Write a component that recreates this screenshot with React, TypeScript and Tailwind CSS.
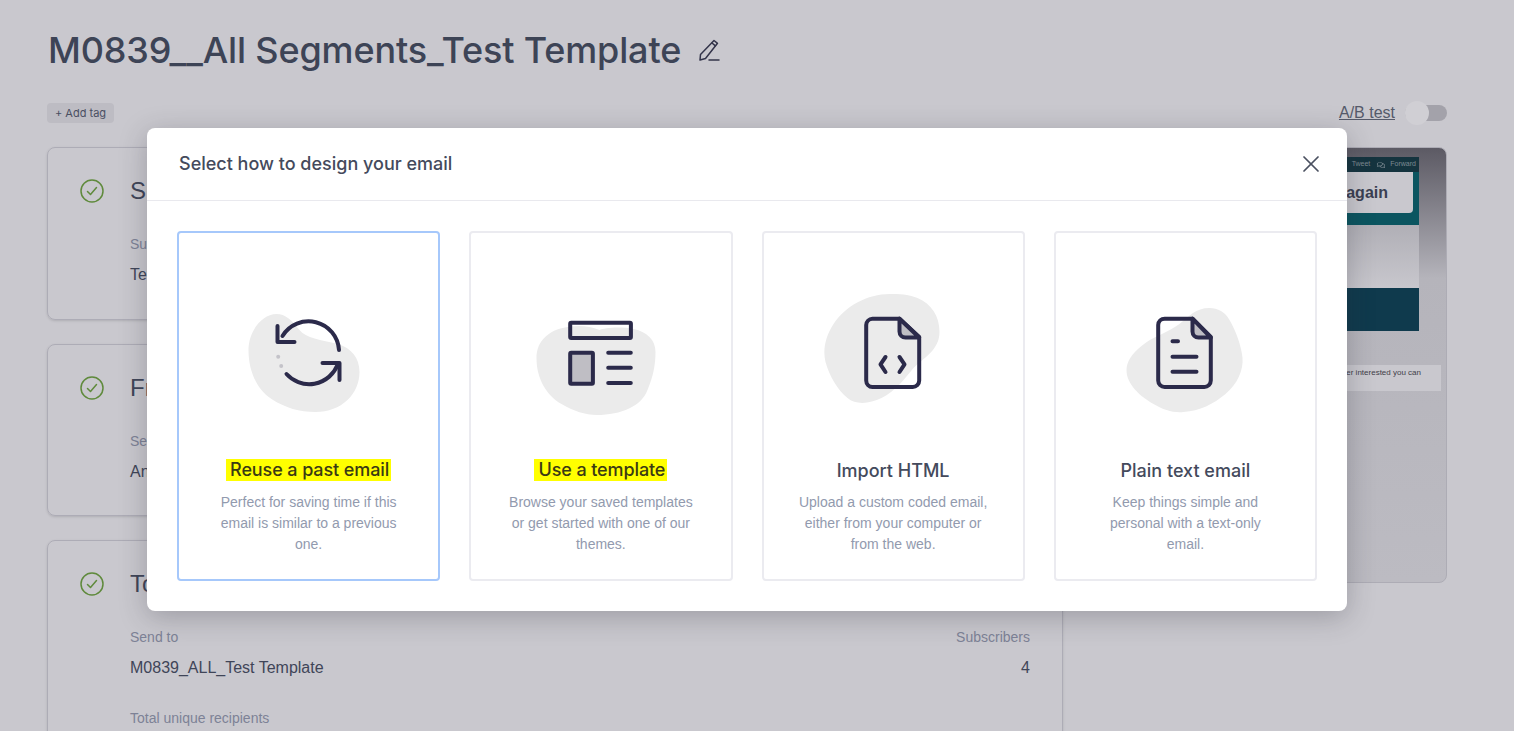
import { FaTwitter, FaRegComments } from "react-icons/fa";
import { X } from "lucide-react";
import type { ReactNode } from "react";

const ink = "#2b2a4a";

const CheckIcon = () => (
  <svg width="24" height="24" viewBox="0 0 24 24" fill="none" className="shrink-0">
    <circle cx="12" cy="12" r="11" stroke="#5f8a3c" strokeWidth="1.5" />
    <path d="M7.5 12.5l3 3 6-7" stroke="#5f8a3c" strokeWidth="1.5" strokeLinecap="round" strokeLinejoin="round" />
  </svg>
);

const Section = ({ title, heightClass, children }: { title: string; heightClass: string; children: ReactNode }) => (
  <div className={`flex gap-[26px] border border-[#adacb6] rounded-lg pl-[32px] pr-[32px] pt-[31px] shadow-sm ${heightClass}`}>
    <CheckIcon />
    <div className="flex-1 -mt-[2px]">
      <h2 className="text-2xl leading-[28px] text-[#3f4558]">{title}</h2>
      <div className="mt-[29px]">{children}</div>
    </div>
  </div>
);

const Label = ({ children }: { children: ReactNode }) => (
  <div className="text-sm leading-5 text-[#7d8296]">{children}</div>
);
const Value = ({ children }: { children: ReactNode }) => (
  <div className="mt-[11px] text-base leading-5 text-[#3f4558]">{children}</div>
);

const ReuseArt = () => (
  <svg width="140" height="130" viewBox="239.5 285 140 130" fill="none">
    <path d="M277 314C262 314 249 332 249 350C249 372 258 390 272 399C286 408 300 412 316 412C342 412 360 394 360 372C360 358 352 348 338 344C322 340 306 338 300 330C292 320 286 314 277 314Z" fill="#ebebeb" />
    <g stroke={ink} strokeWidth="4" strokeLinecap="round" strokeLinejoin="round">
      <path d="M339.5 350A30.5 30.5 0 0 0 283 336" />
      <path d="M278 326V342H295" />
      <path d="M287 374A30.5 30.5 0 0 0 338 365" />
      <path d="M323 363H340V380" />
    </g>
    <circle cx="278.7" cy="356.7" r="2" fill="#c4c3c9" />
    <circle cx="281.7" cy="366" r="2" fill="#c4c3c9" />
  </svg>
);

const TemplateArt = () => (
  <svg width="140" height="130" viewBox="531.5 285 140 130" fill="none">
    <path d="M568 327C548 330 537 342 537 358C537 380 548 396 562 404C574 411 586 415 597 415C622 415 642 406 648 390C654 376 656 364 656 352C656 340 648 332 634 329C620 326 604 328 600 330C590 326 580 325 568 327Z" fill="#ebebeb" />
    <g stroke={ink} strokeWidth="4" strokeLinecap="round" strokeLinejoin="round">
      <rect x="570.7" y="322.7" width="60.7" height="15.4" rx="1" />
      <rect x="570.7" y="352.7" width="22.7" height="31" rx="1" fill="#bfbec4" />
      <path d="M608.7 352.7H631.3M608.7 367.7H631.3M608.7 383H631.3" />
    </g>
  </svg>
);

const HtmlArt = () => (
  <svg width="140" height="130" viewBox="823.5 285 140 130" fill="none">
    <path d="M890 294C868 294 846 306 834 324C826 336 823 350 826 362C830 376 838 390 848 398C856 405 870 404 882 398C896 391 904 380 914 368C924 358 940 350 940 332C940 316 932 304 918 298C908 294 900 294 890 294Z" fill="#ebebeb" />
    <g stroke={ink} strokeWidth="4" strokeLinecap="round" strokeLinejoin="round">
      <path d="M900 318.7H873A6.5 6.5 0 0 0 866.7 325V380.5A6.5 6.5 0 0 0 873 387H913.2A6.5 6.5 0 0 0 919.7 380.5V337Z" />
      <path d="M900 318.7V331.5A6 6 0 0 0 906 337.5H919.7Z" fill="#bfbec4" />
      <path d="M886 357L881 364.3L886 372M900 357L905 364.3L900 372" />
    </g>
  </svg>
);

const PlainArt = () => (
  <svg width="140" height="130" viewBox="1115.5 285 140 130" fill="none">
    <path d="M1210 308C1196 308 1190 316 1180 324C1168 333 1154 336 1142 346C1132 354 1127 362 1127 370C1127 384 1140 396 1154 404C1164 410 1174 413 1184 412C1200 411 1214 404 1226 394C1238 384 1244 370 1243 358C1242 346 1236 330 1230 320C1226 312 1218 308 1210 308Z" fill="#ebebeb" />
    <g stroke={ink} strokeWidth="4" strokeLinecap="round" strokeLinejoin="round">
      <path d="M1193 318.7H1165.2A6.5 6.5 0 0 0 1158.7 325V380.5A6.5 6.5 0 0 0 1165.2 387H1204.8A6.5 6.5 0 0 0 1211.3 380.5V337Z" />
      <path d="M1193 318.7V331.5A6 6 0 0 0 1199 337.5H1211.3Z" fill="#bfbec4" />
      <path d="M1173 341.3H1178.5M1173 356.7H1197M1173 371.7H1197" />
    </g>
  </svg>
);

const options = [
  { art: <ReuseArt />, title: "Reuse a past email", marked: true, lines: ["Perfect for saving time if this", "email is similar to a previous", "one."], active: true },
  { art: <TemplateArt />, title: "Use a template", marked: true, lines: ["Browse your saved templates", "or get started with one of our", "themes."], active: false },
  { art: <HtmlArt />, title: "Import HTML", marked: false, lines: ["Upload a custom coded email,", "either from your computer or", "from the web."], active: false },
  { art: <PlainArt />, title: "Plain text email", marked: false, lines: ["Keep things simple and", "personal with a text-only", "email."], active: false },
];

const Preview = () => (
  <div className="w-[360px] h-[436px] rounded-lg border border-[#adacb5] bg-gradient-to-b from-[#5c5a64] via-[#b5b4bb] via-30% to-[#bcbbc2] pt-[9px] overflow-hidden font-['Liberation_Sans',sans-serif]">
    <div className="ml-auto mr-[27px] w-[300px] h-[15px] bg-[#15343f] flex items-center justify-end gap-[5px] pr-[3px] text-[7px] text-[#7d8a92]">
      <FaTwitter className="text-[#7d8a92]" size={7} />
      <span>Tweet</span>
      <FaRegComments className="ml-[2px] text-[#7d8a92]" size={8} />
      <span>Forward</span>
    </div>
    <div className="ml-auto mr-[27px] w-[300px] h-[53px] bg-[#0b5560] pr-[6px]">
      <div className="h-[41px] bg-[#c9c8ce] rounded-br-sm flex items-center justify-end pr-[25px] text-base font-bold text-[#3a3f52]">
        again
      </div>
    </div>
    <div className="ml-auto mr-[27px] w-[300px] h-[63px] bg-gradient-to-b from-[#b0afb6] to-[#c8c7cd]" />
    <div className="ml-auto mr-[27px] w-[300px] h-[43px] bg-[#0f3a4d]" />
    <div className="mt-[34px] ml-auto mr-[5px] w-[320px] h-[26px] bg-[#c9c8ce] pt-[2px] pr-[20px] text-right text-[8px] text-[#3f4048]">
      er interested you can
    </div>
  </div>
);

export default function App() {
  return (
    <div className="relative h-[731px] overflow-hidden bg-[#c9c8ce] font-['Liberation_Sans',sans-serif]">
      <div className="pl-[47px] pr-[67px] pt-[26px]">
        <div className="flex items-center gap-[17px] pl-[1px] h-[48px]">
          <h1 className="font-['Inter',sans-serif] font-medium text-[36px] tracking-[-0.15px] leading-[48px] text-[#3d4456]">
            M0839__All Segments_Test Template
          </h1>
          <svg width="22" height="22" viewBox="0 0 22 22" fill="none" stroke="#33344a" strokeWidth="1.5" strokeLinecap="round" strokeLinejoin="round">
            <path d="M16 1.5l3.5 2.8L7.5 19.5l-5.5 1.5.5-5.5z" />
            <path d="M14 4l3.4 2.8" />
            <path d="M11 21h10" />
          </svg>
        </div>

        <div className="mt-[29px] h-[20px] flex items-center justify-between">
          <button className="h-[20px] px-[8px] rounded-sm bg-[#bdbcc3] text-[11px] text-[#4a4f62] font-['Inter',sans-serif]">
            + Add tag
          </button>
          <div className="flex items-center gap-[10px]">
            <span className="text-base text-[#555a6a] underline">A/B test</span>
            <div className="relative w-[42px] h-[16px] rounded-full bg-[#a3a2aa]">
              <span className="absolute left-0 -top-[4px] w-[24px] h-[24px] rounded-full bg-[#d0cfd4]" />
            </div>
          </div>
        </div>

        <div className="mt-[24px] flex gap-[24px]">
          <div className="flex-1 flex flex-col gap-[24px]">
            <Section title="Subject" heightClass="h-[173px]">
              <Label>Subject</Label>
              <Value>Test Template</Value>
            </Section>
            <Section title="From" heightClass="h-[172px]">
              <Label>Sender</Label>
              <Value>Andrew</Value>
            </Section>
            <Section title="To" heightClass="h-[300px]">
              <div className="flex justify-between">
                <Label>Send to</Label>
                <Label>Subscribers</Label>
              </div>
              <div className="flex justify-between">
                <Value>M0839_ALL_Test Template</Value>
                <Value>4</Value>
              </div>
              <div className="mt-[30px]">
                <Label>Total unique recipients</Label>
              </div>
            </Section>
          </div>
          <Preview />
        </div>
      </div>

      <div className="absolute left-[147px] top-[128px] w-[1200px] rounded-lg bg-white shadow-[0_6px_28px_rgba(40,40,50,0.28)]">
        <div className="h-[73px] border-b border-[#e9e9ee] flex items-center justify-between pl-[32px] pr-[22px]">
          <h3 className="font-['Inter',sans-serif] font-medium text-[18px] text-[#444a5c] -mt-[2px]">
            Select how to design your email
          </h3>
          <X size={28} strokeWidth={1.5} className="text-[#4a5060]" />
        </div>
        <div className="grid grid-cols-4 gap-[29px] px-[30px] pt-[30px] pb-[30px]">
          {options.map((o) => (
            <div
              key={o.title}
              className={`h-[350px] rounded border-2 flex flex-col items-center pt-[52px] ${o.active ? "border-[#a6c8fb]" : "border-[#ebebf0]"}`}
            >
              {o.art}
              <div className="mt-[43px] h-[24px] flex items-center font-['Inter',sans-serif] font-medium text-[18px]">
                {o.marked ? (
                  <span className="bg-[#ffff00] pl-[4px] pr-[2px] leading-[22px] tracking-[-0.1px] text-[#3a3a14]">{o.title}</span>
                ) : (
                  <span className="text-[#444a5c]">{o.title}</span>
                )}
              </div>
              <div className="mt-[10px] text-sm leading-[21px] text-center text-[#929aae]">
                {o.lines.map((line) => (
                  <div key={line}>{line}</div>
                ))}
              </div>
            </div>
          ))}
        </div>
      </div>
    </div>
  );
}
